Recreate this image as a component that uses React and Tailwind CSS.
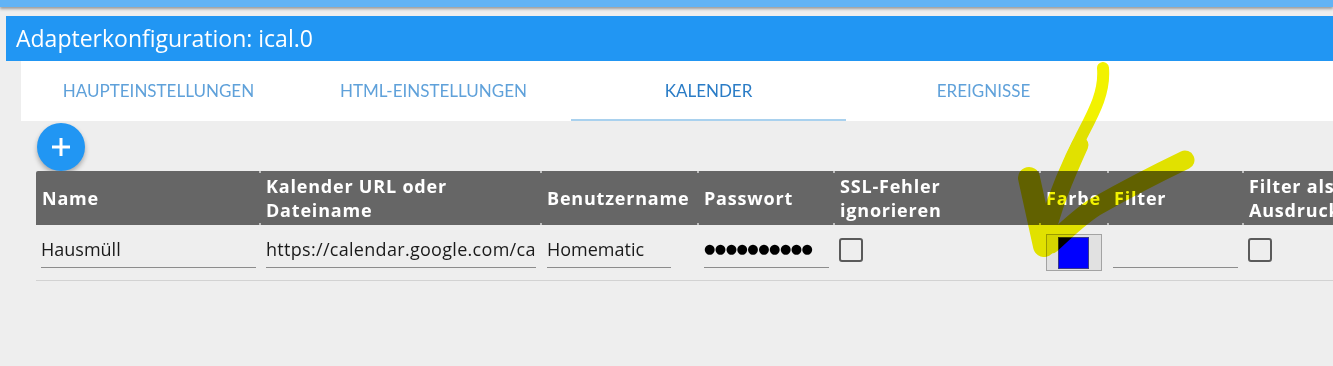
import { useState } from "react"

const tabs = ["HAUPTEINSTELLUNGEN", "HTML-EINSTELLUNGEN", "KALENDER", "EREIGNISSE"]

const columns = [
  { label: "Name", width: "w-[224px]" },
  { label: ["Kalender URL oder", "Dateiname"], width: "w-[281px]" },
  { label: "Benutzername", width: "w-[157px]" },
  { label: "Passwort", width: "w-[136px]" },
  { label: ["SSL-Fehler", "ignorieren"], width: "w-[206px]" },
  { label: "Farbe", width: "w-[68px]" },
  { label: "Filter", width: "w-[135px]" },
  { label: ["Filter als", "Ausdruck"], width: "w-[170px]" },
]

// text field with material underline
const Field = ({ value, className = "" }) => (
  <div
    className={`mt-[7px] h-[36px] leading-[34px] border-b border-[#8c8c8c] whitespace-nowrap overflow-hidden text-[18px] text-[#1a1a1a] ${className}`}
  >
    {value}
  </div>
)

const Checkbox = () => <div className="mt-[13px] w-[24px] h-[24px] border-2 border-[#5a5a5a] rounded-[3px]" />

const App = () => {
  const [activeTab] = useState(2)

  return (
    <div className="relative w-[1333px] h-[366px] overflow-hidden bg-[#eeeeee] font-['Open_Sans',sans-serif]">
      <div className="h-[7px] bg-[#62b3f5] shadow-[0_2px_3px_rgba(0,0,0,0.35)]" />

      <div className="pl-[6px] pt-[9px]">
        <div className="h-[45px] bg-[#2196f3] flex items-center pl-[10px] pb-[1px] text-white text-[23px]">
          Adapterkonfiguration: ical.0
        </div>

        {/* Tabs */}
        <div className="ml-[15px] h-[60px] bg-white flex">
          {tabs.map((tab, i) => (
            <div
              key={tab}
              className={`w-[275px] flex items-center justify-center font-['Lato',sans-serif] text-[17px] ${
                i === activeTab ? "text-[#2a7cc6] border-b-2 border-[#a9d1ee] pt-[2px]" : "text-[#5fa1da]"
              }`}
            >
              {tab}
            </div>
          ))}
        </div>

        <div className="ml-[30px]">
          <div className="h-[50px] pt-[2px] pl-[1px]">
            <button className="w-[48px] h-[48px] rounded-full bg-[#2196f3] flex items-center justify-center shadow-[0_3px_5px_rgba(0,0,0,0.3)]">
              <svg width="20" height="20" viewBox="0 0 20 20">
                <path d="M10 1v18M1 10h18" stroke="white" strokeWidth="3" />
              </svg>
            </button>
          </div>

          {/* Table header */}
          <div className="flex w-max h-[54px] bg-[#666666] rounded-tl-[2px]">
            {columns.map((col, i) => (
              <div
                key={i}
                className={`relative ${col.width} shrink-0 flex items-center px-[6px] text-white font-bold text-[18px] leading-[24px] tracking-[0.8px]`}
              >
                {i > 0 && (
                  <>
                    <span className="absolute left-[-1px] top-0 w-[2px] h-[2px] bg-[#bdbdbd]" />
                    <span className="absolute left-[-1px] bottom-0 w-[2px] h-[2px] bg-[#bdbdbd]" />
                  </>
                )}
                {Array.isArray(col.label) ? (
                  <div>
                    {col.label[0]}
                    <br />
                    {col.label[1]}
                  </div>
                ) : (
                  col.label
                )}
              </div>
            ))}
          </div>

          {/* Row */}
          <div className="flex w-max h-[56px] border-b border-[#d2d2d2]">
            <div className="w-[224px] shrink-0 pl-[5px] pr-[4px]">
              <Field value="Hausmüll" />
            </div>
            <div className="w-[281px] shrink-0 pl-[6px] pr-[5px]">
              <Field value="https://calendar.google.com/calendar/ical/basic.ics" className="tracking-[0.3px]" />
            </div>
            <div className="w-[157px] shrink-0 pl-[6px]">
              <Field value="Homematic" className="w-[124px]" />
            </div>
            <div className="w-[136px] shrink-0 pl-[6px]">
              <Field
                value="●●●●●●●●●●"
                className="w-[125px] font-['DejaVu_Sans',sans-serif] !text-[13px] tracking-[-0.5px] text-black"
              />
            </div>
            <div className="w-[206px] shrink-0 pl-[5px]">
              <Checkbox />
            </div>
            <div className="w-[68px] shrink-0 pl-[6px]">
              <div className="mt-[9px] w-[56px] h-[37px] bg-[#e1e1e1] border border-[#a3a3a3] pl-[11px] pt-[2px]">
                <div className="w-[31px] h-[32px] bg-[#0000ff] border border-[#3a3a8a]" />
              </div>
            </div>
            <div className="w-[135px] shrink-0 pl-[5px]">
              <Field value="" className="w-[125px]" />
            </div>
            <div className="w-[170px] shrink-0 pl-[5px]">
              <Checkbox />
            </div>
          </div>
        </div>
      </div>

      {/* highlighter marks drawn over the screenshot */}
      <svg
        className="absolute inset-0 pointer-events-none mix-blend-multiply"
        width="1333"
        height="366"
        viewBox="0 0 1333 366"
      >
        <g fill="none" stroke="#f2f200" strokeLinecap="round" strokeLinejoin="round">
          <path d="M1103 68 C1105 92 1094 112 1082 135 C1068 162 1056 190 1046 222" strokeWidth="12" />
          <path d="M1080 145 C1066 176 1052 208 1045 242" strokeWidth="17" />
          <path d="M1029 178 C1034 200 1039 224 1044 246" strokeWidth="22" />
          <path d="M1185 160 C1160 172 1125 190 1095 207 C1078 218 1064 232 1051 244" strokeWidth="19" />
        </g>
      </svg>
    </div>
  )
}

export default App
